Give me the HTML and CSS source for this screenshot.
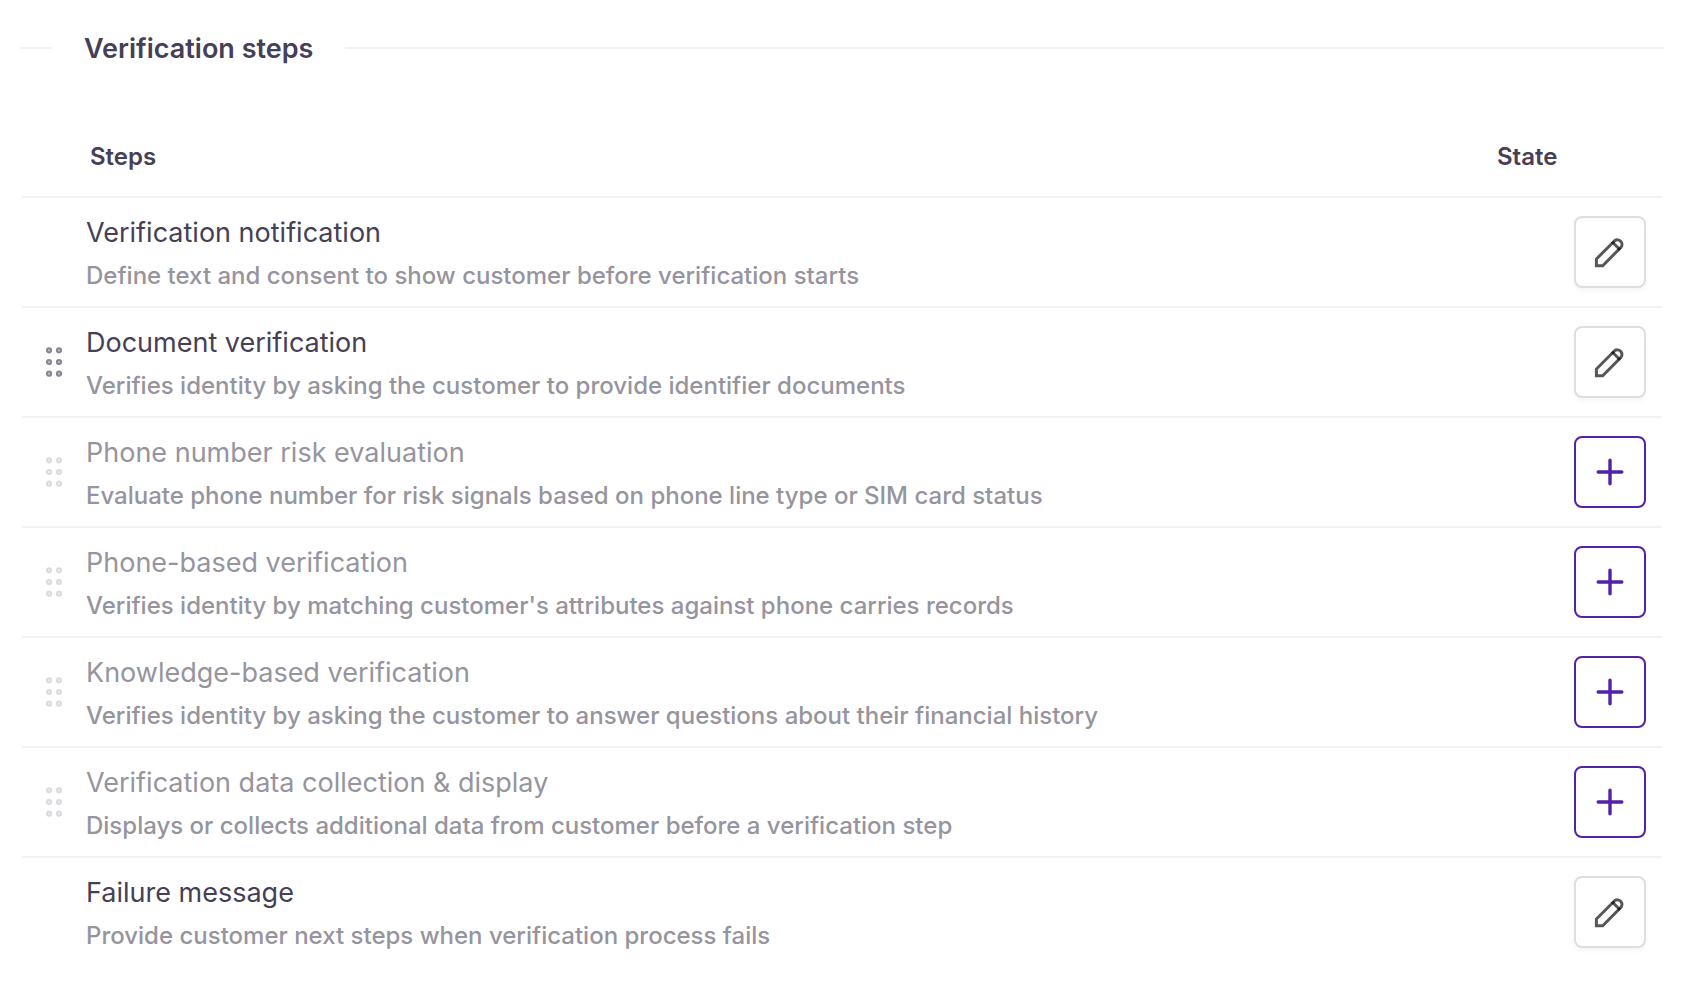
FILE: index.html
```html
<!DOCTYPE html>
<html lang="en">
<head>
<meta charset="utf-8">
<title>Verification steps</title>
<link rel="stylesheet" href="styles.css">
</head>
<body>
<svg class="sprite" aria-hidden="true">
  <symbol id="pencil" viewBox="0 0 32 32">
    <path d="M2.4 29.7V23L20.6 4.8A4.6 4.6 0 0 1 27 11.3L8.7 29.7Z"/>
    <path d="M18 5.8L26 13.8"/>
  </symbol>
  <symbol id="plus" viewBox="0 0 32 32">
    <path d="M16 4.2V27.8M4.2 16H27.8"/>
  </symbol>
  <symbol id="grip" viewBox="0 0 16 30">
    <circle cx="3" cy="3.3" r="2.1"/><circle cx="13" cy="3.3" r="2.1"/>
    <circle cx="3" cy="15" r="2.1"/><circle cx="13" cy="15" r="2.1"/>
    <circle cx="3" cy="26.7" r="2.1"/><circle cx="13" cy="26.7" r="2.1"/>
  </symbol>
</svg>
<main class="panel">
  <div class="heading">
    <h1 class="heading-text">Verification steps</h1>
  </div>
  <table class="steps">
    <thead>
      <tr>
        <th class="col-grip"></th>
        <th class="col-step" scope="col">Steps</th>
        <th class="col-state" scope="col">State</th>
      </tr>
    </thead>
    <tbody>
      <tr>
        <td></td>
        <td class="step"><div class="name">Verification notification</div><div class="info">Define text and consent to show customer before verification starts</div></td>
        <td class="action"><button class="btn edit" type="button" aria-label="Edit verification notification"><svg><use href="#pencil"/></svg></button></td>
      </tr>
      <tr>
        <td class="grip"><svg><use href="#grip"/></svg></td>
        <td class="step"><div class="name">Document verification</div><div class="info">Verifies identity by asking the customer to provide identifier documents</div></td>
        <td class="action"><button class="btn edit" type="button" aria-label="Edit document verification"><svg><use href="#pencil"/></svg></button></td>
      </tr>
      <tr class="inactive">
        <td class="grip"><svg><use href="#grip"/></svg></td>
        <td class="step"><div class="name">Phone number risk evaluation</div><div class="info">Evaluate phone number for risk signals based on phone line type or SIM card status</div></td>
        <td class="action"><button class="btn add" type="button" aria-label="Add phone number risk evaluation"><svg><use href="#plus"/></svg></button></td>
      </tr>
      <tr class="inactive">
        <td class="grip"><svg><use href="#grip"/></svg></td>
        <td class="step"><div class="name">Phone-based verification</div><div class="info">Verifies identity by matching customer's attributes against phone carries records</div></td>
        <td class="action"><button class="btn add" type="button" aria-label="Add phone-based verification"><svg><use href="#plus"/></svg></button></td>
      </tr>
      <tr class="inactive">
        <td class="grip"><svg><use href="#grip"/></svg></td>
        <td class="step"><div class="name">Knowledge-based verification</div><div class="info">Verifies identity by asking the customer to answer questions about their financial history</div></td>
        <td class="action"><button class="btn add" type="button" aria-label="Add knowledge-based verification"><svg><use href="#plus"/></svg></button></td>
      </tr>
      <tr class="inactive">
        <td class="grip"><svg><use href="#grip"/></svg></td>
        <td class="step"><div class="name">Verification data collection &amp; display</div><div class="info">Displays or collects additional data from customer before a verification step</div></td>
        <td class="action"><button class="btn add" type="button" aria-label="Add verification data collection and display"><svg><use href="#plus"/></svg></button></td>
      </tr>
      <tr>
        <td></td>
        <td class="step"><div class="name">Failure message</div><div class="info">Provide customer next steps when verification process fails</div></td>
        <td class="action"><button class="btn edit" type="button" aria-label="Edit failure message"><svg><use href="#pencil"/></svg></button></td>
      </tr>
    </tbody>
  </table>
</main>
</body>
</html>
```
FILE: styles.css
```css
* { box-sizing: border-box; }

body {
  margin: 0;
  background: #fff;
  color: #463f55;
  font-family: Inter, "Liberation Sans", sans-serif;
}

.sprite { display: none; }

.panel { padding: 27px 22px 0 20px; }

.heading {
  display: flex;
  align-items: center;
  gap: 32px;
}

.heading::before,
.heading::after {
  content: "";
  height: 2px;
  background: #f2f2f2;
}

.heading::before { width: 32px; }
.heading::after { flex: 1; }

.heading-text {
  margin: 0;
  padding-top: 2px;
  font-size: 27px;
  line-height: 40px;
  font-weight: 600;
}

.steps {
  width: calc(100% - 4px);
  margin: 47px 2px 0;
  border-collapse: separate;
  border-spacing: 0;
  table-layout: fixed;
}

.steps th {
  height: 82px;
  padding: 2px 0 0 4px;
  border-bottom: 2px solid #f2f2f2;
  font-size: 24px;
  line-height: 32px;
  font-weight: 600;
  text-align: left;
}

.steps .col-grip { width: 64px; padding: 0; }
.steps .col-state { width: 181px; padding-left: 16px; }

.steps td {
  height: 110px;
  padding: 0;
  border-bottom: 2px solid #f2f2f2;
  vertical-align: middle;
}

.steps tr:last-child td { border-bottom-color: transparent; }

.steps .step { padding-top: 4px; }

.name {
  font-size: 27px;
  line-height: 44px;
}

.info {
  color: #96949e;
  font-size: 24px;
  line-height: 42px;
  font-weight: 500;
}

.inactive .name { color: #96949e; }

.grip svg {
  display: block;
  width: 16px;
  height: 30px;
  margin: 0 auto;
  fill: #c4c1c9;
  stroke: #898494;
  stroke-width: 2;
}

.inactive .grip svg {
  fill: #ededee;
  stroke: #dcdbdf;
}

.steps .action { padding-right: 16px; }

.btn {
  display: flex;
  align-items: center;
  justify-content: center;
  width: 72px;
  height: 72px;
  margin-left: auto;
  padding: 0;
  border: 2px solid;
  border-radius: 8px;
  background: #fff;
  cursor: pointer;
}

.btn svg {
  width: 32px;
  height: 32px;
  fill: none;
}

.edit {
  border-color: #dedede;
  box-shadow: 0 3px 4px rgba(0, 0, 0, 0.04);
}

.edit svg {
  stroke: rgba(0, 0, 0, 0.66);
  stroke-width: 3;
}

.add { border-color: #5222a8; }

.add svg {
  stroke: #5222a8;
  stroke-width: 3.4;
  stroke-linecap: round;
}
```
